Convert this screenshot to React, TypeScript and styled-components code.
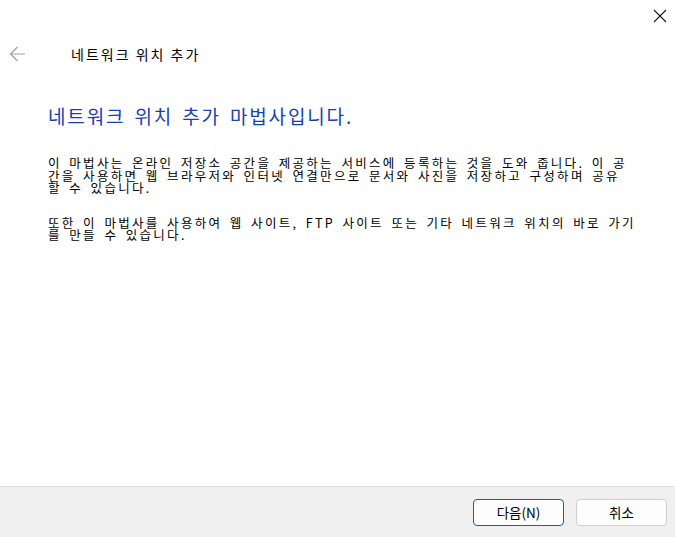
import React from "react";
import styled, { createGlobalStyle } from "styled-components";

const GlobalStyle = createGlobalStyle`
  html, body {
    margin: 0;
    padding: 0;
    background: #ffffff;
  }
  * {
    box-sizing: border-box;
  }
`;

const FONT = `"Noto Sans CJK KR", "Noto Sans", sans-serif`;

const Window = styled.div`
  width: 675px;
  height: 537px;
  display: flex;
  flex-direction: column;
  background: #ffffff;
  font-family: ${FONT};
  color: #000000;
  overflow: hidden;
`;

const TitleBar = styled.div`
  height: 32px;
  display: flex;
  justify-content: flex-end;
  align-items: center;
`;

const CloseButton = styled.button`
  width: 30px;
  height: 32px;
  border: none;
  background: transparent;
  padding: 0;
  display: flex;
  align-items: center;
  justify-content: center;
`;

const NavRow = styled.div`
  height: 44px;
  display: flex;
  align-items: center;
  padding-left: 8px;
`;

const BackButton = styled.button`
  width: 18px;
  height: 18px;
  border: none;
  background: transparent;
  padding: 0;
  display: flex;
  align-items: center;
  justify-content: center;
`;

const WizardTitle = styled.span`
  margin-left: 45px;
  font-size: 14px;
  letter-spacing: 2px;
  line-height: 18px;
  color: #000000;
`;

const Content = styled.main`
  flex: 1;
  padding: 27px 30px 0 48px;
`;

const Heading = styled.h1`
  margin: 0 0 28px 0;
  font-size: 19px;
  font-weight: 400;
  line-height: 26px;
  letter-spacing: 1.85px;
  word-spacing: 3px;
  color: #1740b3;
`;

const Paragraph = styled.div<{ $gap?: number }>`
  display: flex;
  flex-direction: column;
  margin: 0 0 ${(p) => p.$gap ?? 0}px 0;
`;

const Line = styled.div`
  height: 12.5px;
  font-size: 12.5px;
  line-height: 12.5px;
  letter-spacing: 2.3px;
  word-spacing: 2.4px;
  white-space: nowrap;
  color: #000000;
`;

const Footer = styled.footer`
  height: 51px;
  border-top: 1px solid #dfdfdf;
  background: #f0f0f0;
  display: flex;
  justify-content: flex-end;
  align-items: center;
  gap: 12px;
  padding-right: 8px;
`;

const Button = styled.button<{ $primary?: boolean }>`
  width: 91px;
  height: 27px;
  border-radius: 4px;
  border: 1px solid ${(p) => (p.$primary ? "#0067c0" : "#cfcfcf")};
  background: #fdfdfd;
  font-family: ${FONT};
  font-size: 13.5px;
  color: #000000;
  padding: 0;
`;

const introLines = [
  "이 마법사는 온라인 저장소 공간을 제공하는 서비스에 등록하는 것을 도와 줍니다. 이 공",
  "간을 사용하면 웹 브라우저와 인터넷 연결만으로 문서와 사진을 저장하고 구성하며 공유",
  "할 수 있습니다.",
];

const shortcutLines = [
  "또한 이 마법사를 사용하여 웹 사이트, FTP 사이트 또는 기타 네트워크 위치의 바로 가기",
  "를 만들 수 있습니다.",
];

const TextBlock = ({ lines, gap }: { lines: string[]; gap?: number }) => (
  <Paragraph $gap={gap}>
    {lines.map((line) => (
      <Line key={line}>{line}</Line>
    ))}
  </Paragraph>
);

export default function App() {
  return (
    <>
      <GlobalStyle />
      <Window>
        <TitleBar>
          <CloseButton aria-label="닫기">
            <svg width="14" height="14" viewBox="0 0 14 14">
              <path d="M1 1 L13 13 M13 1 L1 13" stroke="#1a1a1a" strokeWidth="1.1" fill="none" />
            </svg>
          </CloseButton>
        </TitleBar>
        <NavRow>
          <BackButton aria-label="뒤로">
            <svg width="17" height="16" viewBox="0 0 17 16">
              <path
                d="M1.5 8 H16 M8.5 1 L1.5 8 L8.5 15"
                stroke="#a0a0a0"
                strokeWidth="1.2"
                fill="none"
              />
            </svg>
          </BackButton>
          <WizardTitle>네트워크 위치 추가</WizardTitle>
        </NavRow>
        <Content>
          <Heading>네트워크 위치 추가 마법사입니다.</Heading>
          <TextBlock lines={introLines} gap={22} />
          <TextBlock lines={shortcutLines} />
        </Content>
        <Footer>
          <Button $primary>다음(N)</Button>
          <Button>취소</Button>
        </Footer>
      </Window>
    </>
  );
}
